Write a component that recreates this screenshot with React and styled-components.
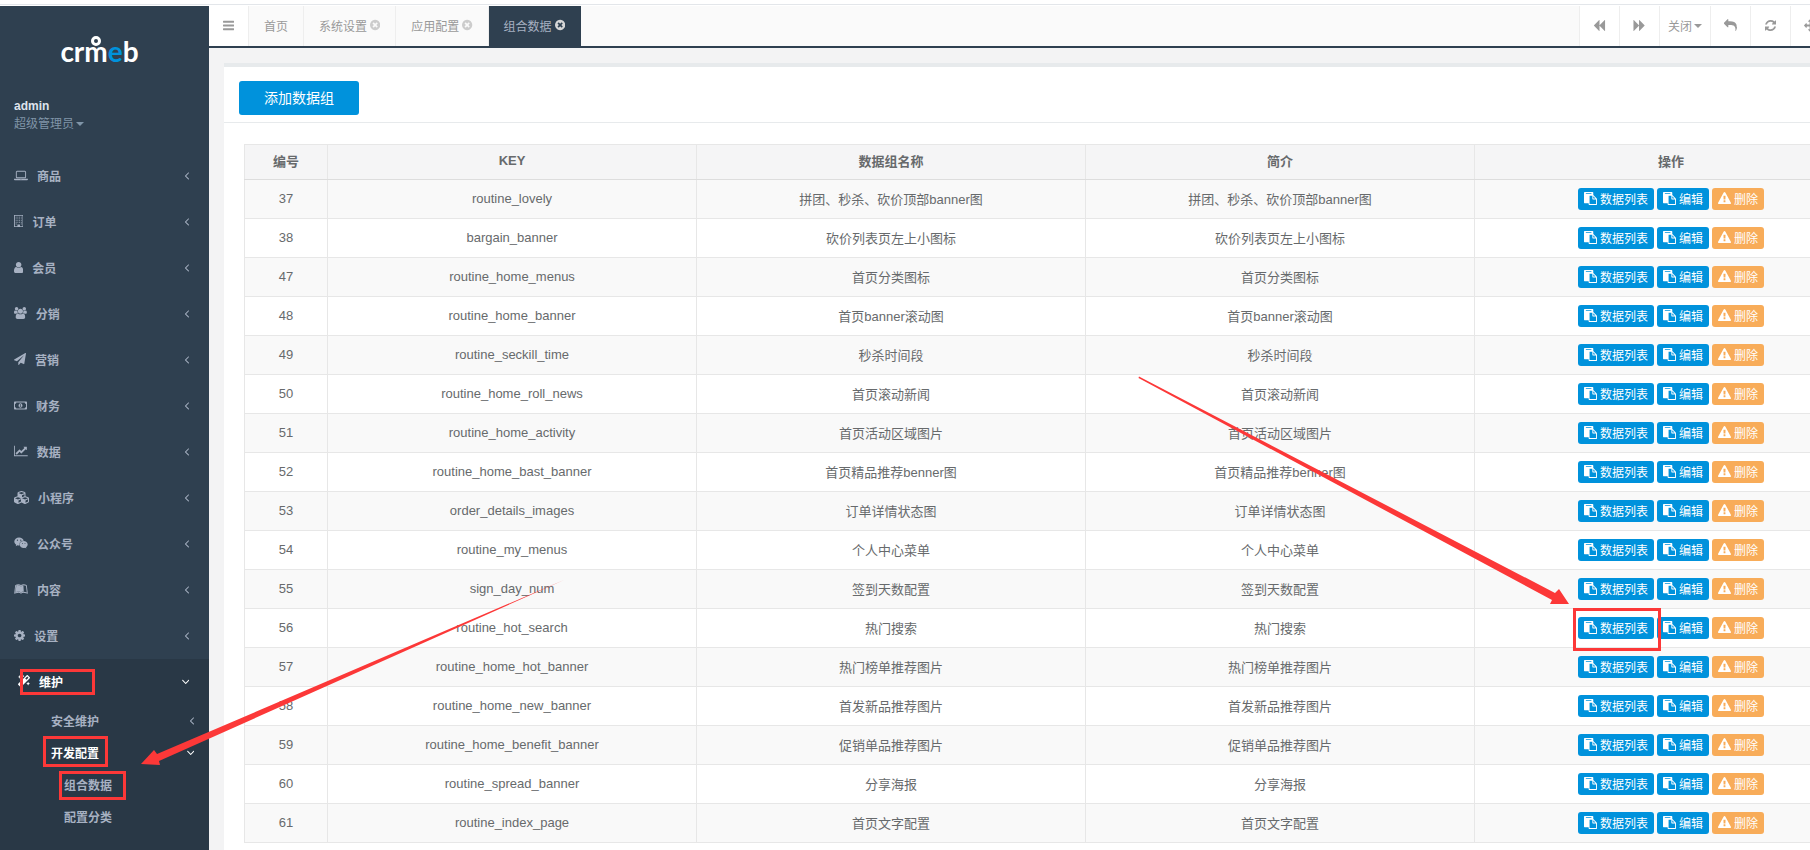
import React from "react";
import styled, { createGlobalStyle, css } from "styled-components";
import {
  FaCubes,
  FaLeanpub,
  FaMagic,
  FaRegMoneyBillAlt,
  FaWeixin,
} from "react-icons/fa";

const GlobalStyle = createGlobalStyle`
  *, *::before {
    box-sizing: border-box;
  }

  html, body, #root {
    height: 100%;
  }

  body {
    margin: 0;
    overflow: hidden;
    background: #fff;
    color: #676a6c;
    font-family: "Liberation Sans", "Noto Sans CJK SC", sans-serif;
    font-size: 13px;
  }

  button {
    font-family: inherit;
    cursor: pointer;
  }

  a {
    color: inherit;
    text-decoration: none;
  }
`;

// Page shell. The page is wider than the window, the right end is cut off.
const Page = styled.div`
  position: relative;
  display: flex;
  flex-direction: column;
  width: calc(100% + 93px);
  height: 100%;
`;

const TopStrip = styled.div`
  flex: none;
  height: 5px;
  margin-bottom: 1px;
  border-bottom: 1px solid #e3e6ea;
  background: #fff;
`;

const Body = styled.div`
  display: flex;
  flex: 1;
  min-height: 0;
`;

// Sidebar
const Sidebar = styled.nav`
  display: flex;
  flex-direction: column;
  flex: none;
  width: 209px;
  background: #2f4050;
  color: #a7b1c2;
  font-size: 12px;
`;

const Brand = styled.div`
  display: flex;
  justify-content: center;
  padding: 28px 10px 0 0;
  height: 91px;
  color: #fff;
  font-family: Lato, sans-serif;
  font-size: 28px;
  font-weight: 700;
  line-height: 34px;
`;

const BrandHead = styled.span`
  position: relative;

  &::before {
    content: "";
    position: absolute;
    top: 2px;
    left: 50%;
    width: 10px;
    height: 10px;
    margin-left: -5px;
    border: 3px solid #fff;
    border-radius: 50%;
  }
`;

const BrandBlue = styled.span`
  color: #0092dc;
`;

const Profile = styled.a`
  display: block;
  height: 56px;
  padding-left: 14px;
  line-height: 18px;
`;

const ProfileName = styled.strong`
  display: block;
  color: #dfe4ed;
`;

const ProfileRole = styled.span`
  display: flex;
  align-items: center;
  gap: 2px;
  color: #8095a8;
`;

const Caret = styled.span`
  border-top: 4px solid currentColor;
  border-left: 4px solid transparent;
  border-right: 4px solid transparent;
`;

const Menu = styled.ul`
  margin: 0;
  padding: 0;
  list-style: none;
  font-weight: 700;
`;

const OpenGroup = styled.li`
  flex: 1;
  border-left: 4px solid #293846;
  background: #293846;
`;

const MenuLink = styled.a`
  display: flex;
  align-items: center;
  gap: 9px;
  height: ${(props) => (props.$level ? 32 : 46)}px;
  padding-bottom: 2px;
  padding-left: ${(props) => [14, 47, 60][props.$level || 0]}px;
  padding-right: ${(props) => (props.$level ? 15 : 20)}px;
  color: ${(props) => (props.$active ? "#fff" : "#a7b1c2")};
`;

const MenuLabel = styled.span`
  flex: 1;
`;

const MenuRoot = styled(Menu)`
  display: flex;
  flex: 1;
  flex-direction: column;
`;

// Main column
const Main = styled.main`
  display: flex;
  flex: 1;
  flex-direction: column;
  min-width: 0;
  background: #f3f3f4;
`;

const TabBar = styled.div`
  display: flex;
  flex: none;
  height: 42px;
  border-bottom: 2px solid #2f4050;
  background: #fafafa;
  color: #999;
  font-size: 12px;
`;

const toolCell = css`
  display: flex;
  align-items: center;
  justify-content: center;
  gap: 2px;
  padding: 0 0 1px;
  border: 0;
  background: #fff;
  color: #999;
  font-size: 12px;
`;

const MenuToggle = styled.button`
  ${toolCell}
  width: 40px;
  border-right: 1px solid #eee;
`;

const ToolButton = styled.button`
  ${toolCell}
  width: ${(props) => (props.$wide ? 51 : 40)}px;
  border-left: 1px solid #eee;
`;

const Tools = styled.div`
  display: flex;
  padding-right: 73px;
  background: #fff;
`;

const Tabs = styled.div`
  display: flex;
  flex: 1;
`;

const Tab = styled.a`
  display: flex;
  align-items: center;
  gap: 3px;
  padding: 0 15px 2px;
  border-right: 1px solid ${(props) => (props.$active ? "#2f4050" : "#eee")};
  background: ${(props) => (props.$active ? "#2f4050" : "#fafafa")};
  color: ${(props) => (props.$active ? "#a7b1c2" : "#999")};
`;

const CloseMark = styled.span`
  display: flex;
  color: ${(props) => (props.$active ? "#d6d6d6" : "#ccc")};
`;

// Content panel
const Panel = styled.section`
  flex: 1;
  margin: 15px 15px 0;
  border-top: 4px solid #e7eaec;
  background: #fff;
`;

const PanelTitle = styled.div`
  padding: 14px 15px 7px;
  border-bottom: 1px solid #e7eaec;
`;

const AddButton = styled.button`
  display: block;
  width: 120px;
  height: 34px;
  padding: 0 0 2px;
  border: 0;
  border-radius: 3px;
  background: #0092dc;
  color: #fff;
  font-size: 14px;
`;

const PanelContent = styled.div`
  padding: 21px 21px 0 20px;
`;

const Table = styled.table`
  width: 100%;
  border-collapse: collapse;
  table-layout: fixed;
  text-align: center;

  th,
  td {
    padding: 0 0 2px;
    border: 1px solid #e7e7e7;
  }

  th {
    height: 35px;
    padding-bottom: 3px;
    border-bottom-color: #ddd;
    background: #f5f5f6;
  }

  td {
    height: 39px;
  }

  td:last-child {
    padding: 0;
  }

  tbody tr:nth-child(odd) {
    background: #f9f9f9;
  }
`;

const Column = styled.col`
  width: ${(props) => props.$width}px;
`;

const Actions = styled.div`
  display: flex;
  justify-content: center;
  gap: 3px;
`;

const ActionButton = styled.button`
  display: flex;
  align-items: center;
  gap: 3px;
  height: 22px;
  padding: 0 6px 1px;
  border: 0;
  border-radius: 3px;
  background: ${(props) => (props.$warning ? "#f8ac59" : "#0092dc")};
  color: #fff;
  font-size: 12px;
`;

// Red marks drawn over the page
const Marks = styled.svg`
  position: absolute;
  top: 0;
  left: 0;
  width: 100%;
  height: 100%;
  pointer-events: none;
`;

const Glyph = styled.svg`
  flex: none;
  height: ${(props) => props.$size}px;
  fill: currentColor;
`;

const shapes = {
  laptop: [
    "0 0 1920 1792",
    "M416 1280q-66 0-113-47t-47-113v-704q0-66 47-113t113-47h1088q66 0 113 47t47 113v704q0 66-47 113t-113 47h-1088zm-32-864v704q0 13 9.500 22.500t22.500 9.500h1088q13 0 22.500-9.500t9.500-22.500v-704q0-13-9.500-22.500t-22.500-9.500h-1088q-13 0-22.500 9.500t-9.500 22.500zm1376 928h160v96q0 40-47 68t-113 28h-1600q-66 0-113-28t-47-68v-96h1760zm-720 96q16 0 16-16t-16-16h-160q-16 0-16 16t16 16h160z",
  ],
  building: [
    "0 0 1408 1792",
    "M0 0h1408v1792h-1408zM128 128v1536h384v-256h384v256h384v-1536zM256 256h128v128h-128zm256 0h128v128h-128zm256 0h128v128h-128zm256 0h128v128h-128zM256 512h128v128h-128zm256 0h128v128h-128zm256 0h128v128h-128zm256 0h128v128h-128zM256 768h128v128h-128zm256 0h128v128h-128zm256 0h128v128h-128zm256 0h128v128h-128zM256 1024h128v128h-128zm256 0h128v128h-128zm256 0h128v128h-128zm256 0h128v128h-128zM256 1280h128v128h-128zm768 0h128v128h-128z",
  ],
  user: [
    "256 0 1280 1792",
    "M1536 1399q0 109-62.500 187t-150.500 78h-854q-88 0-150.500-78t-62.500-187q0-85 8.500-160.500t31.500-152 58.500-131 94-89 134.500-34.500q131 128 313 128t313-128q76 0 134.500 34.500t94 89 58.500 131 31.500 152 8.500 160.500zm-256-887q0 159-112.500 271.500t-271.500 112.500-271.500-112.500-112.500-271.500 112.500-271.500 271.500-112.500 271.500 112.500 112.500 271.500z",
  ],
  group: [
    "64 0 1920 1792",
    "M657 896q-162 5-265 128h-134q-82 0-138-40.500t-56-118.500q0-353 124-353 6 0 43.500 21t97.500 42.500 119 21.500q67 0 133-23-5 37-5 66 0 139 81 256zm1071 637q0 120-73 189.500t-194 69.500h-874q-121 0-194-69.500t-73-189.500q0-53 3.500-103.500t14-109 26.500-108.500 43-97.500 62-81 85.500-53.500 111.500-20q10 0 43 21.500t73 48 107 48 135 21.500 135-21.500 107-48 73-48 43-21.500q61 0 111.500 20t85.500 53.500 62 81 43 97.500 26.500 108.500 14 109 3.500 103.500zm-1024-1277q0 106-75 181t-181 75-181-75-75-181 75-181 181-75 181 75 75 181zm704 384q0 159-112.500 271.500t-271.500 112.500-271.500-112.500-112.500-271.500 112.500-271.500 271.500-112.500 271.500 112.500 112.500 271.500zm576 225q0 78-56 118.500t-138 40.500h-134q-103-123-265-128 81-117 81-256 0-29-5-66 66 23 133 23 59 0 119-21.500t97.500-42.500 43.500-21q124 0 124 353zm-128-609q0 106-75 181t-181 75-181-75-75-181 75-181 181-75 181 75 75 181z",
  ],
  plane: [
    "0 0 1792 1792",
    "M1764 11q33 24 27 64l-256 1536q-5 29-32 45-14 8-31 8-11 0-24-5l-453-185-242 295q-18 23-49 23-13 0-22-4-19-7-30.500-23.500t-11.500-36.500v-349l864-1059-1069 925-395-162q-37-14-40-55-2-40 32-59l1664-960q15-9 32-9 20 0 36 11z",
  ],
  chart: [
    "0 0 2048 1792",
    "M2048 1536v128h-2048v-1536h128v1408h1920zm-128-1248v435q0 21-19.500 29.500t-35.500-7.500l-121-121-633 633q-10 10-23 10t-23-10l-233-233-416 416-192-192 585-585q10-10 23-10t23 10l233 233 464-464-121-121q-16-16-7.500-35.500t29.500-19.500h435q14 0 23 9t9 23z",
  ],
  cog: [
    "128 0 1536 1792",
    "M1152 896q0-106-75-181t-181-75-181 75-75 181 75 181 181 75 181-75 75-181zm512-109v222q0 12-8 23t-20 13l-185 28q-19 54-39 91 35 50 107 138 10 12 10 25t-9 23q-27 37-99 108t-94 71q-12 0-26-9l-138-108q-44 23-91 38-16 136-29 186-7 28-36 28h-222q-14 0-24.500-8.500t-11.500-21.500l-28-184q-49-16-90-37l-141 107q-10 9-25 9-14 0-25-11-126-114-165-168-7-10-7-23 0-12 8-23 15-21 51-66.500t54-70.500q-27-50-41-99l-183-27q-13-2-21-12.500t-8-23.500v-222q0-12 8-23t19-13l186-28q14-46 39-92-40-57-107-138-10-12-10-24 0-10 9-23 26-36 98.500-107.500t94.500-71.500q13 0 26 10l138 107q44-23 91-38 16-136 29-186 7-28 36-28h222q14 0 24.500 8.500t11.500 21.500l28 184q49 16 90 37l142-107q9-9 24-9 13 0 25 10 129 119 165 170 7 8 7 22 0 12-8 23-15 21-51 66.500t-54 70.500q26 50 41 98l183 28q13 2 21 12.500t8 23.500z",
  ],
  left: [
    "640 0 576 1792",
    "M1203 544q0 13-10 23l-393 393 393 393q10 10 10 23t-10 23l-50 50q-10 10-23 10t-23-10l-466-466q-10-10-10-23t10-23l466-466q10-10 23-10t23 10l50 50q10 10 10 23z",
  ],
  down: [
    "384 0 1024 1792",
    "M1395 736q0 13-10 23l-466 466q-10 10-23 10t-23-10l-466-466q-10-10-10-23t10-23l50-50q10-10 23-10t23 10l393 393 393-393q10-10 23-10t23 10l50 50q10 10 10 23z",
  ],
  bars: [
    "128 0 1536 1792",
    "M1664 1344v128q0 26-19 45t-45 19h-1408q-26 0-45-19t-19-45v-128q0-26 19-45t45-19h1408q26 0 45 19t19 45zm0-512v128q0 26-19 45t-45 19h-1408q-26 0-45-19t-19-45v-128q0-26 19-45t45-19h1408q26 0 45 19t19 45zm0-512v128q0 26-19 45t-45 19h-1408q-26 0-45-19t-19-45v-128q0-26 19-45t45-19h1408q26 0 45 19t19 45z",
  ],
  close: [
    "128 0 1536 1792",
    "M1277 1122q0-26-19-45l-181-181 181-181q19-19 19-45 0-27-19-46l-90-90q-19-19-46-19-26 0-45 19l-181 181-181-181q-19-19-45-19-27 0-46 19l-90 90q-19 19-19 46 0 26 19 45l181 181-181 181q-19 19-19 45 0 27 19 46l90 90q19 19 46 19 26 0 45-19l181-181 181 181q19 19 45 19 27 0 46-19l90-90q19-19 19-46zm387-226q0 209-103 385.500t-279.500 279.500-385.500 103-385.500-103-279.500-279.500-103-385.500 103-385.500 279.500-279.500 385.500-103 385.500 103 279.500 279.500 103 385.500z",
  ],
  backward: [
    "64 0 1664 1792",
    "M1683 141q19-19 32-13t13 32v1472q0 26-13 32t-32-13l-710-710q-9-9-13-19v710q0 26-13 32t-32-13l-710-710q-19-19-19-45t19-45l710-710q19-19 32-13t13 32v710q4-10 13-19z",
  ],
  forward: [
    "0 0 1664 1792",
    "M109 1651q-19 19-32 13t-13-32v-1472q0-26 13-32t32 13l710 710q8 8 13 19v-710q0-26 13-32t32 13l710 710q19 19 19 45t-19 45l-710 710q-19 19-32 13t-13-32v-710q-5 10-13 19z",
  ],
  reply: [
    "0 0 1792 1792",
    "M1792 1120q0 166-127 451-3 7-10.500 24t-13.500 30-13 22q-12 17-28 17-15 0-23.500-10t-8.500-25q0-9 2.500-26.500t2.500-23.500q5-68 5-123 0-112-19.500-200.500t-54-153.500-89-112-115.500-77.500-142.500-47.500-158.500-24.500-179-7.500h-224v256q0 26-19 45t-45 19-45-19l-512-512q-19-19-19-45t19-45l512-512q19-19 45-19t45 19 19 45v256h224q713 0 875 403 53 134 53 333z",
  ],
  refresh: [
    "128 0 1536 1792",
    "M1639 1056q0 5-1 7-64 268-268 434.500t-478 166.500q-146 0-282.500-55t-243.500-157l-129 129q-19 19-45 19t-45-19-19-45v-448q0-26 19-45t45-19h448q26 0 45 19t19 45-19 45l-137 137q71 66 161 102t187 36q134 0 250-65t186-179q11-17 53-117 8-23 30-23h192q13 0 22.500 9.500t9.500 22.500zm25-800v448q0 26-19 45t-45 19h-448q-26 0-45-19t-19-45 19-45l138-138q-148-137-349-137-134 0-250 65t-186 179q-11 17-53 117-8 23-30 23h-199q-13 0-22.500-9.500t-9.500-22.500v-7q65-268 270-434.500t480-166.500q146 0 284 55.500t245 156.500l130-129q19-19 45-19t45 19 19 45z",
  ],
  arrows: [
    "0 0 1792 1792",
    "M1792 896q0 26-19 45l-256 256q-19 19-45 19t-45-19-19-45v-128h-384v384h128q26 0 45 19t19 45-19 45l-256 256q-19 19-45 19t-45-19l-256-256q-19-19-19-45t19-45 45-19h128v-384h-384v128q0 26-19 45t-45 19-45-19l-256-256q-19-19-19-45t19-45l256-256q19-19 45-19t45 19 19 45v128h384v-384h-128q-26 0-45-19t-19-45 19-45l256-256q19-19 45-19t45 19l256 256q19 19 19 45t-19 45-45 19h-128v384h384v-128q0-26 19-45t45-19 45 19l256 256q19 19 19 45z",
  ],
  paste: [
    "0 0 1792 1792",
    "M768 1664h896v-640h-416q-40 0-68-28t-28-68v-416h-384v1152zm256-1440v-64q0-13-9.500-22.500t-22.500-9.500h-704q-13 0-22.500 9.500t-9.500 22.500v64q0 13 9.500 22.500t22.500 9.500h704q13 0 22.500-9.500t9.500-22.500zm256 672h299l-299-299v299zm512 128v672q0 40-28 68t-68 28h-960q-40 0-68-28t-28-68v-160h-544q-40 0-68-28t-28-68v-1344q0-40 28-68t68-28h1088q40 0 68 28t28 68v328q21 13 36 28l408 408q28 28 48 76t20 88z",
  ],
  warning: [
    "0 0 1792 1792",
    "M1024 1375v-190q0-14-9.500-23.500t-22.500-9.500h-192q-13 0-22.500 9.500t-9.500 23.500v190q0 14 9.500 23.500t22.500 9.500h192q13 0 22.500-9.500t9.500-23.500zm-2-374l18-459q0-12-10-19-13-11-24-11h-220q-11 0-24 11-10 7-10 21l17 457q0 10 10 16.500t24 6.500h185q14 0 23.500-6.500t10.500-16.500zm-14-934l768 1408q35 63-2 126-17 29-46.500 46t-63.500 17h-1536q-34 0-63.500-17t-46.500-46q-37-63-2-126l768-1408q17-31 47-49t65-18 65 18 47 49z",
  ],
};

const Icon = ({ name, size = 13 }) => (
  <Glyph viewBox={shapes[name][0]} $size={size} aria-hidden="true">
    <path d={shapes[name][1]} fillRule={name === "building" ? "evenodd" : "nonzero"} />
  </Glyph>
);

const menu = [
  { label: "商品", icon: <Icon name="laptop" /> },
  { label: "订单", icon: <Icon name="building" size={12} /> },
  { label: "会员", icon: <Icon name="user" /> },
  { label: "分销", icon: <Icon name="group" size={12} /> },
  { label: "营销", icon: <Icon name="plane" size={12} /> },
  { label: "财务", icon: <FaRegMoneyBillAlt size={13} /> },
  { label: "数据", icon: <Icon name="chart" size={12} /> },
  { label: "小程序", icon: <FaCubes size={15} /> },
  { label: "公众号", icon: <FaWeixin size={14} /> },
  { label: "内容", icon: <FaLeanpub size={14} /> },
  { label: "设置", icon: <Icon name="cog" /> },
];

const tabs = [
  { label: "首页" },
  { label: "系统设置", closable: true },
  { label: "应用配置", closable: true },
  { label: "组合数据", closable: true, active: true },
];

const columns = [
  { title: "编号", width: 83 },
  { title: "KEY", width: 369 },
  { title: "数据组名称", width: 389 },
  { title: "简介", width: 389 },
  { title: "操作", width: 393 },
];

const groups = [
  [37, "routine_lovely", "拼团、秒杀、砍价顶部banner图"],
  [38, "bargain_banner", "砍价列表页左上小图标"],
  [47, "routine_home_menus", "首页分类图标"],
  [48, "routine_home_banner", "首页banner滚动图"],
  [49, "routine_seckill_time", "秒杀时间段"],
  [50, "routine_home_roll_news", "首页滚动新闻"],
  [51, "routine_home_activity", "首页活动区域图片"],
  [52, "routine_home_bast_banner", "首页精品推荐benner图"],
  [53, "order_details_images", "订单详情状态图"],
  [54, "routine_my_menus", "个人中心菜单"],
  [55, "sign_day_num", "签到天数配置"],
  [56, "routine_hot_search", "热门搜索"],
  [57, "routine_home_hot_banner", "热门榜单推荐图片"],
  [58, "routine_home_new_banner", "首发新品推荐图片"],
  [59, "routine_home_benefit_banner", "促销单品推荐图片"],
  [60, "routine_spread_banner", "分享海报"],
  [61, "routine_index_page", "首页文字配置"],
];

const SideMenu = () => (
  <Sidebar>
    <Brand>
      cr<BrandHead>m</BrandHead>
      <BrandBlue>e</BrandBlue>b
    </Brand>
    <Profile href="#profile">
      <ProfileName>admin</ProfileName>
      <ProfileRole>
        超级管理员
        <Caret />
      </ProfileRole>
    </Profile>
    <MenuRoot>
      {menu.map((item) => (
        <li key={item.label}>
          <MenuLink href="#menu">
            {item.icon}
            <MenuLabel>{item.label}</MenuLabel>
            <Icon name="left" />
          </MenuLink>
        </li>
      ))}
      <OpenGroup>
        <MenuLink href="#maintain" $active>
          <FaMagic size={12} />
          <MenuLabel>维护</MenuLabel>
          <Icon name="down" />
        </MenuLink>
        <Menu>
          <li>
            <MenuLink href="#safe" $level={1}>
              <MenuLabel>安全维护</MenuLabel>
              <Icon name="left" />
            </MenuLink>
          </li>
          <li>
            <MenuLink href="#develop" $level={1} $active>
              <MenuLabel>开发配置</MenuLabel>
              <Icon name="down" />
            </MenuLink>
            <Menu>
              <li>
                <MenuLink href="#group" $level={2}>组合数据</MenuLink>
              </li>
              <li>
                <MenuLink href="#category" $level={2}>配置分类</MenuLink>
              </li>
            </Menu>
          </li>
        </Menu>
      </OpenGroup>
    </MenuRoot>
  </Sidebar>
);

const TopTabs = () => (
  <TabBar>
    <MenuToggle aria-label="菜单">
      <Icon name="bars" />
    </MenuToggle>
    <Tabs>
      {tabs.map((tab) => (
        <Tab key={tab.label} href="#tab" $active={tab.active}>
          {tab.label}
          {tab.closable && (
            <CloseMark $active={tab.active}>
              <Icon name="close" size={12} />
            </CloseMark>
          )}
        </Tab>
      ))}
    </Tabs>
    <Tools>
      <ToolButton aria-label="向左">
        <Icon name="backward" />
      </ToolButton>
      <ToolButton aria-label="向右">
        <Icon name="forward" />
      </ToolButton>
      <ToolButton $wide>
        关闭
        <Caret />
      </ToolButton>
      <ToolButton aria-label="返回">
        <Icon name="reply" />
      </ToolButton>
      <ToolButton aria-label="刷新">
        <Icon name="refresh" />
      </ToolButton>
      <ToolButton aria-label="全屏">
        <Icon name="arrows" />
      </ToolButton>
    </Tools>
  </TabBar>
);

const GroupTable = () => (
  <Table>
    <colgroup>
      {columns.map((column) => (
        <Column key={column.title} $width={column.width} />
      ))}
    </colgroup>
    <thead>
      <tr>
        {columns.map((column) => (
          <th key={column.title}>{column.title}</th>
        ))}
      </tr>
    </thead>
    <tbody>
      {groups.map(([id, key, name]) => (
        <tr key={id}>
          <td>{id}</td>
          <td>{key}</td>
          <td>{name}</td>
          <td>{name}</td>
          <td>
            <Actions>
              <ActionButton>
                <Icon name="paste" />
                数据列表
              </ActionButton>
              <ActionButton>
                <Icon name="paste" />
                编辑
              </ActionButton>
              <ActionButton $warning>
                <Icon name="warning" />
                删除
              </ActionButton>
            </Actions>
          </td>
        </tr>
      ))}
    </tbody>
  </Table>
);

const RedMarks = () => (
  <Marks aria-hidden="true">
    <g fill="none" stroke="#fc3838" strokeWidth="3">
      <rect x="21.5" y="670.5" width="72" height="23" />
      <rect x="44.5" y="737.5" width="62" height="28" />
      <rect x="60.5" y="772.5" width="64" height="26" />
      <rect x="1574.5" y="609.5" width="85" height="40" />
    </g>
    <g fill="#fc3838">
      <path d="M1139 376.500L1555 593L1559 589L1569 604L1550 604L1552 600L1138.500 378Z" />
      <path d="M564 580L157 754L154 750L141 764L160 765L159 761Z" />
    </g>
  </Marks>
);

const App = () => {
  return (
    <>
      <GlobalStyle />
      <Page>
        <TopStrip />
        <Body>
          <SideMenu />
          <Main>
            <TopTabs />
            <Panel>
              <PanelTitle>
                <AddButton>添加数据组</AddButton>
              </PanelTitle>
              <PanelContent>
                <GroupTable />
              </PanelContent>
            </Panel>
          </Main>
        </Body>
        <RedMarks />
      </Page>
    </>
  );
};

export default App;
